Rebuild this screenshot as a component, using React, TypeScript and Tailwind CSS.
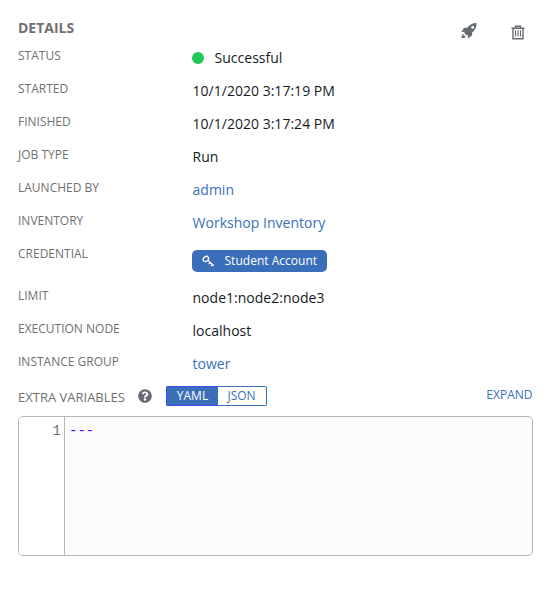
import React from "react";
import { FaQuestionCircle } from "react-icons/fa";

function Row({ label, h = "h-[33px]", children }: { label: string; h?: string; children: React.ReactNode }) {
  return (
    <div className={`flex ${h}`}>
      <div className="w-[174.5px] shrink-0 text-[12px] leading-[17px] text-[#707070]">{label}</div>
      <div className="pt-px text-[14px] leading-[20px] tracking-[0.02px] text-[#161b1f]">{children}</div>
    </div>
  );
}

function Link({ children }: { children: React.ReactNode }) {
  return <a className="text-[#3a70bc]">{children}</a>;
}

function Rocket() {
  return (
    <svg width="18" height="18" viewBox="0 0 18 18" fill="currentColor">
      <path
        fillRule="evenodd"
        d="M16.5 1C12.5 1 9.8 2.6 7.5 5.6L4 6 1.3 10l3.4-.2c-.4.7-.3 1.1.2 1.7l1.4 1.4c.6.5 1 .6 1.7.2L7.8 16.6l4-2.8.4-3.4C15.2 8 16.7 5.2 16.5 1ZM12.7 3.7a1.5 1.5 0 1 1 0 3 1.5 1.5 0 0 1 0-3Z"
      />
      <path d="M3.8 11.8C2.4 12 1.7 14 1.5 16.2c2.3-.1 4.3-.8 4.5-2.3l-1.4.5.2-.8-1.3.4Z" />
    </svg>
  );
}

function Trash() {
  return (
    <svg width="14" height="15" viewBox="0 0 14 15" fill="none" stroke="currentColor" className="mt-[3px]">
      <path strokeWidth="1.4" d="M.5 3.2h13M4.5 3V1.2h5V3M2 3.5v10.3h10V3.5" />
      <path strokeWidth="1.1" d="M4.5 5.3v6.2M7 5.3v6.2M9.5 5.3v6.2" />
    </svg>
  );
}

function KeyIcon() {
  return (
    <svg width="13" height="13" viewBox="0 0 13 13" fill="none" stroke="currentColor" strokeWidth="1.4" className="mr-[9.5px]">
      <ellipse cx="3.9" cy="4" rx="2.9" ry="2.3" transform="rotate(-40 3.9 4)" />
      <path d="M6 5.6l5.8 5.2M8 7.6L6.7 9.1M10.4 9.6L9.2 11.2" />
    </svg>
  );
}

export default function App() {
  return (
    <div className="h-[599px] w-[548px] overflow-hidden bg-white pl-[18px] pr-[15px] pt-[18px] font-['Open_Sans',sans-serif]">
      <div className="flex h-[29px] items-start justify-between">
        <h1 className="text-[14px] font-bold leading-[20px] text-[#707070]">DETAILS</h1>
        <div className="flex gap-[33px] pr-[8.5px] pt-1 text-[#646972]">
          <Rocket />
          <Trash />
        </div>
      </div>
      <Row label="STATUS">
        <span className="-ml-[0.5px] flex items-center">
          <span className="mr-[10.5px] size-3 rounded-full bg-[#21c857]" />
          Successful
        </span>
      </Row>
      <Row label="STARTED">10/1/2020 3:17:19 PM</Row>
      <Row label="FINISHED">10/1/2020 3:17:24 PM</Row>
      <Row label="JOB TYPE">Run</Row>
      <Row label="LAUNCHED BY"><Link>admin</Link></Row>
      <Row label="INVENTORY"><Link>Workshop Inventory</Link></Row>
      <Row label="CREDENTIAL" h="h-[42px]">
        <div className="-ml-[0.5px] mt-1 flex h-[22px] w-[135px] items-center rounded-[5px] bg-[#3a6eb9] pl-[10px] text-[12px] leading-[20px] text-white">
          <KeyIcon />
          Student Account
        </div>
      </Row>
      <Row label="LIMIT">node1:node2:node3</Row>
      <Row label="EXECUTION NODE">localhost</Row>
      <Row label="INSTANCE GROUP"><Link>tower</Link></Row>
      <div className="flex h-[30px] items-start text-[12px] leading-[18px]">
        <span className="mt-[2px] w-[120px] text-[13px] text-[#707070]">EXTRA VARIABLES</span>
        <FaQuestionCircle size={14} className="mt-[3px] text-[#646972]" />
        <div className="ml-[14px] flex h-5 w-[101px] text-center">
          <span className="w-[52px] rounded-l-[2px] border border-r-0 border-[#3f48f0] bg-[#3a6eb9] text-white">YAML</span>
          <span className="w-[49px] rounded-r-[2px] border border-l-0 border-[#3a6eb9] pr-px text-[#3a70bc]">JSON</span>
        </div>
        <a className="ml-auto pr-[0.5px] text-[#3a70bc]">EXPAND</a>
      </div>
      <div className="flex h-[140px] overflow-hidden rounded-[5px] border border-[#b7b7b7] bg-[#fcfcfc] font-['Liberation_Mono',monospace] text-[14px] leading-[20px]">
        <div className="w-[46px] border-r border-[#b7b7b7] bg-white pr-[3px] pt-1 text-right text-[#707070]">1</div>
        <div className="pl-1 pt-1 text-[#5500ff]">---</div>
      </div>
    </div>
  );
}
